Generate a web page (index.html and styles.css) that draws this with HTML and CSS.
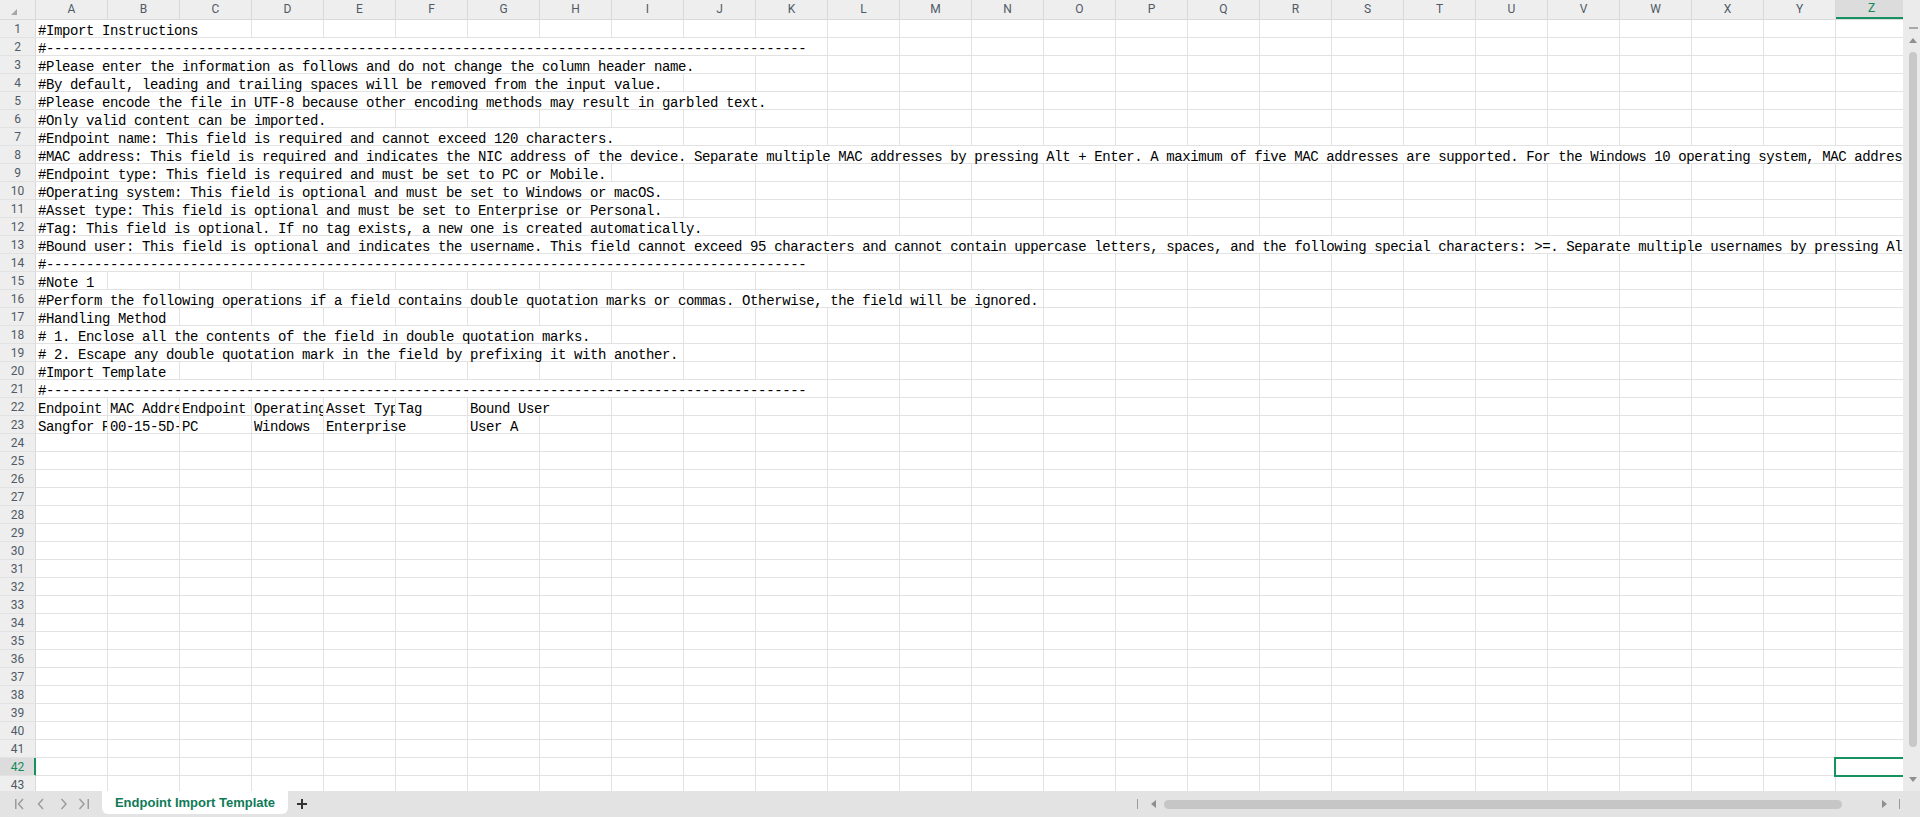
FILE: index.html
```html
<!DOCTYPE html>
<html lang="en">
<head>
<meta charset="utf-8">
<title>Endpoint Import Template</title>
<link rel="stylesheet" href="styles.css">
</head>
<body>
<div class="app">
  <div class="main">
    <div class="grid">
      <div class="colhead">
        <div class="corner"><svg class="corner-tri" width="8" height="8" viewBox="0 0 8 8"><polygon points="7,1 7,7 1,7" fill="#a6a6a6"/></svg></div>
        <div class="ch">A</div><div class="ch">B</div><div class="ch">C</div><div class="ch">D</div><div class="ch">E</div><div class="ch">F</div><div class="ch">G</div><div class="ch">H</div><div class="ch">I</div><div class="ch">J</div><div class="ch">K</div><div class="ch">L</div><div class="ch">M</div><div class="ch">N</div><div class="ch">O</div><div class="ch">P</div><div class="ch">Q</div><div class="ch">R</div><div class="ch">S</div><div class="ch">T</div><div class="ch">U</div><div class="ch">V</div><div class="ch">W</div><div class="ch">X</div><div class="ch">Y</div><div class="ch sel">Z</div>
      </div>
      <div class="rows">
        <div class="row"><div class="rh">1</div><div class="cells"><div class="c s3">#Import Instructions</div></div></div>
        <div class="row"><div class="rh">2</div><div class="cells"><div class="c s11">#-----------------------------------------------------------------------------------------------</div></div></div>
        <div class="row"><div class="rh">3</div><div class="cells"><div class="c s10">#Please enter the information as follows and do not change the column header name.</div></div></div>
        <div class="row"><div class="rh">4</div><div class="cells"><div class="c s9">#By default, leading and trailing spaces will be removed from the input value.</div></div></div>
        <div class="row"><div class="rh">5</div><div class="cells"><div class="c s11">#Please encode the file in UTF-8 because other encoding methods may result in garbled text.</div></div></div>
        <div class="row"><div class="rh">6</div><div class="cells"><div class="c s5">#Only valid content can be imported.</div></div></div>
        <div class="row"><div class="rh">7</div><div class="cells"><div class="c s9">#Endpoint name: This field is required and cannot exceed 120 characters.</div></div></div>
        <div class="row"><div class="rh">8</div><div class="cells"><div class="c s26">#MAC address: This field is required and indicates the NIC address of the device. Separate multiple MAC addresses by pressing Alt + Enter. A maximum of five MAC addresses are supported. For the Windows 10 operating system, MAC addresses</div></div></div>
        <div class="row"><div class="rh">9</div><div class="cells"><div class="c s8">#Endpoint type: This field is required and must be set to PC or Mobile.</div></div></div>
        <div class="row"><div class="rh">10</div><div class="cells"><div class="c s9">#Operating system: This field is optional and must be set to Windows or macOS.</div></div></div>
        <div class="row"><div class="rh">11</div><div class="cells"><div class="c s9">#Asset type: This field is optional and must be set to Enterprise or Personal.</div></div></div>
        <div class="row"><div class="rh">12</div><div class="cells"><div class="c s10">#Tag: This field is optional. If no tag exists, a new one is created automatically.</div></div></div>
        <div class="row"><div class="rh">13</div><div class="cells"><div class="c s26">#Bound user: This field is optional and indicates the username. This field cannot exceed 95 characters and cannot contain uppercase letters, spaces, and the following special characters: &gt;=. Separate multiple usernames by pressing Alt + Enter.</div></div></div>
        <div class="row"><div class="rh">14</div><div class="cells"><div class="c s11">#-----------------------------------------------------------------------------------------------</div></div></div>
        <div class="row"><div class="rh">15</div><div class="cells"><div class="c s1">#Note 1</div></div></div>
        <div class="row"><div class="rh">16</div><div class="cells"><div class="c s14">#Perform the following operations if a field contains double quotation marks or commas. Otherwise, the field will be ignored.</div></div></div>
        <div class="row"><div class="rh">17</div><div class="cells"><div class="c s2">#Handling Method</div></div></div>
        <div class="row"><div class="rh">18</div><div class="cells"><div class="c s8"># 1. Enclose all the contents of the field in double quotation marks.</div></div></div>
        <div class="row"><div class="rh">19</div><div class="cells"><div class="c s9"># 2. Escape any double quotation mark in the field by prefixing it with another.</div></div></div>
        <div class="row"><div class="rh">20</div><div class="cells"><div class="c s2">#Import Template</div></div></div>
        <div class="row"><div class="rh">21</div><div class="cells"><div class="c s11">#-----------------------------------------------------------------------------------------------</div></div></div>
        <div class="row"><div class="rh">22</div><div class="cells"><div class="c s1">Endpoint Name</div><div class="c s1">MAC Address</div><div class="c s1">Endpoint Type</div><div class="c s1">Operating System</div><div class="c s1">Asset Type</div><div class="c s1">Tag</div><div class="c s2">Bound User</div></div></div>
        <div class="row"><div class="rh">23</div><div class="cells"><div class="c s1">Sangfor PC</div><div class="c s1">00-15-5D-01-02-03</div><div class="c s1">PC</div><div class="c s1">Windows</div><div class="c s2">Enterprise</div><div class="c s1">User A</div></div></div>
        <div class="row"><div class="rh">24</div><div class="cells"></div></div>
        <div class="row"><div class="rh">25</div><div class="cells"></div></div>
        <div class="row"><div class="rh">26</div><div class="cells"></div></div>
        <div class="row"><div class="rh">27</div><div class="cells"></div></div>
        <div class="row"><div class="rh">28</div><div class="cells"></div></div>
        <div class="row"><div class="rh">29</div><div class="cells"></div></div>
        <div class="row"><div class="rh">30</div><div class="cells"></div></div>
        <div class="row"><div class="rh">31</div><div class="cells"></div></div>
        <div class="row"><div class="rh">32</div><div class="cells"></div></div>
        <div class="row"><div class="rh">33</div><div class="cells"></div></div>
        <div class="row"><div class="rh">34</div><div class="cells"></div></div>
        <div class="row"><div class="rh">35</div><div class="cells"></div></div>
        <div class="row"><div class="rh">36</div><div class="cells"></div></div>
        <div class="row"><div class="rh">37</div><div class="cells"></div></div>
        <div class="row"><div class="rh">38</div><div class="cells"></div></div>
        <div class="row"><div class="rh">39</div><div class="cells"></div></div>
        <div class="row"><div class="rh">40</div><div class="cells"></div></div>
        <div class="row"><div class="rh">41</div><div class="cells"></div></div>
        <div class="row"><div class="rh sel">42</div><div class="cells"><div class="gap s25"></div><div class="c s1 cur"></div></div></div>
        <div class="row"><div class="rh">43</div><div class="cells"></div></div>
      </div>
    </div>
    <div class="vscroll">
      <div class="vs-dash"></div>
      <svg class="vs-up" width="8" height="5" viewBox="0 0 8 5"><polygon points="4,0 8,5 0,5" fill="#8f8f8f"/></svg>
      <div class="vs-thumb"></div>
      <svg class="vs-down" width="8" height="5" viewBox="0 0 8 5"><polygon points="0,0 8,0 4,5" fill="#8f8f8f"/></svg>
    </div>
  </div>
  <div class="tabbar">
    <svg class="nav" width="100" height="26" viewBox="0 0 100 26">
      <g fill="none" stroke="#9c9c9c" stroke-width="1.5">
        <line x1="15.75" y1="8" x2="15.75" y2="18"/>
        <polyline points="23,8 18.5,13 23,18"/>
        <polyline points="43,8 38.5,13 43,18"/>
        <polyline points="61.5,8 66,13 61.5,18"/>
        <polyline points="79.5,8 84,13 79.5,18"/>
        <line x1="88.25" y1="8" x2="88.25" y2="18"/>
      </g>
    </svg>
    <div class="tab">Endpoint Import Template</div>
    <svg class="plus" width="12" height="12" viewBox="0 0 12 12"><g stroke="#333" stroke-width="2"><line x1="1" y1="6" x2="11" y2="6"/><line x1="6" y1="1" x2="6" y2="11"/></g></svg>
    <div class="hscroll">
      <div class="hs-bar"></div>
      <svg class="hs-left" width="5" height="8" viewBox="0 0 5 8"><polygon points="0,4 5,0 5,8" fill="#8f8f8f"/></svg>
      <div class="hs-thumb"></div>
      <svg class="hs-right" width="5" height="8" viewBox="0 0 5 8"><polygon points="5,4 0,0 0,8" fill="#8f8f8f"/></svg>
      <div class="hs-bar end"></div>
    </div>
  </div>
</div>
</body>
</html>
```

FILE: styles.css
```css
* { box-sizing: border-box; }
html, body {
  margin: 0;
  padding: 0;
  width: 1920px;
  height: 817px;
  overflow: hidden;
  background: #ffffff;
}
.app {
  display: flex;
  flex-direction: column;
  width: 1920px;
  height: 817px;
}
.main {
  display: flex;
  height: 791px;
  flex: none;
}
.grid {
  width: 1903px;
  flex: none;
  overflow: hidden;
  display: flex;
  flex-direction: column;
}
.colhead {
  display: flex;
  height: 20px;
  flex: none;
  background: #eeeeee;
  border-bottom: 1px solid #d9d9d9;
}
.corner {
  width: 36px;
  flex: none;
  border-right: 1px solid #dadada;
  display: flex;
  align-items: flex-end;
  padding: 0 0 3px 10px;
}
.corner-tri { display: block; }
.ch {
  width: 72px;
  flex: none;
  border-right: 1px solid #dadada;
  text-align: center;
  font-family: Roboto, "Liberation Sans", sans-serif;
  font-size: 12px;
  line-height: 19px;
  color: #505a66;
}
.ch.sel {
  background: #dcdcdc;
  color: #138a5c;
  border-bottom: 2px solid #15925f;
  line-height: 17px;
}
.rows {
  display: flex;
  flex-direction: column;
}
.row {
  display: flex;
  height: 18px;
  flex: none;
}
.rh {
  width: 36px;
  flex: none;
  background: #eeeeee;
  border-right: 1px solid #dadada;
  border-bottom: 1px solid #e2e2e2;
  text-align: center;
  font-family: Roboto, "Liberation Sans", sans-serif;
  font-size: 12px;
  line-height: 17px;
  padding-top: 1px;
  color: #505a66;
}
.rh.sel {
  background: #dcdcdc;
  color: #138a5c;
  border-right: 1px solid #15925f;
  box-shadow: inset -1px 0 0 #15925f;
}
.cells {
  flex: 1;
  display: flex;
  min-width: 0;
  border-bottom: 1px solid #e2e2e2;
  background-image: linear-gradient(to left, #e2e2e2 1px, transparent 1px);
  background-size: 72px 100%;
}
.c {
  flex: none;
  height: 17px;
  background: #ffffff;
  border-right: 1px solid #e2e2e2;
  padding: 5px 0 0 2px;
  overflow-x: clip;
  overflow-y: visible;
  white-space: nowrap;
  font-family: "Liberation Mono", "DejaVu Sans Mono", monospace;
  font-size: 14px;
  letter-spacing: -0.4px;
  line-height: 12px;
  color: #000000;
}
.gap { flex: none; height: 17px; }
.s1 { width: 72px; }
.s2 { width: 144px; }
.s3 { width: 216px; }
.s5 { width: 360px; }
.s8 { width: 576px; }
.s9 { width: 648px; }
.s10 { width: 720px; }
.s11 { width: 792px; }
.s14 { width: 1008px; }
.s25 { width: 1800px; }
.s26 { width: 1872px; }
.c.cur {
  overflow: visible;
  position: relative;
}
.c.cur::after {
  content: "";
  position: absolute;
  left: -2px;
  top: -1px;
  right: -1px;
  bottom: -2px;
  border: 2px solid #15925f;
}
.vscroll {
  width: 17px;
  flex: none;
  background: #ebebeb;
  display: flex;
  flex-direction: column;
  align-items: center;
  padding-top: 27px;
  padding-left: 3px;
}
.vs-dash {
  width: 9px;
  height: 2px;
  background: #a9a9a9;
  flex: none;
}
.vs-up { display: block; margin-top: 9px; flex: none; }
.vs-thumb {
  width: 8px;
  height: 695px;
  margin-top: 9px;
  border-radius: 4px;
  background: #c8c8c8;
  flex: none;
}
.vs-down { display: block; margin-top: 30px; flex: none; }
.tabbar {
  height: 26px;
  flex: none;
  background: #e3e3e3;
  display: flex;
  align-items: flex-start;
}
.nav { display: block; flex: none; }
.tab {
  margin-left: 2px;
  width: 186px;
  height: 23px;
  flex: none;
  background: #ffffff;
  border-radius: 0 0 6px 6px;
  text-align: center;
  font-family: "Liberation Sans", Arial, sans-serif;
  font-weight: bold;
  font-size: 13px;
  line-height: 23px;
  color: #0f7a56;
}
.plus {
  display: block;
  flex: none;
  margin: 7px 0 0 8px;
}
.hscroll {
  margin-left: auto;
  width: 783px;
  height: 26px;
  display: flex;
  align-items: center;
  padding-right: 19px;
}
.hs-bar {
  width: 1px;
  height: 10px;
  background: #9a9a9a;
  flex: none;
}
.hs-left { display: block; margin-left: 13px; flex: none; }
.hs-thumb {
  width: 678px;
  height: 9px;
  border-radius: 5px;
  background: #c6c6c6;
  margin-left: 8px;
  flex: none;
}
.hs-right { display: block; margin-left: 40px; flex: none; }
.hs-bar.end { margin-left: 12px; }
```
